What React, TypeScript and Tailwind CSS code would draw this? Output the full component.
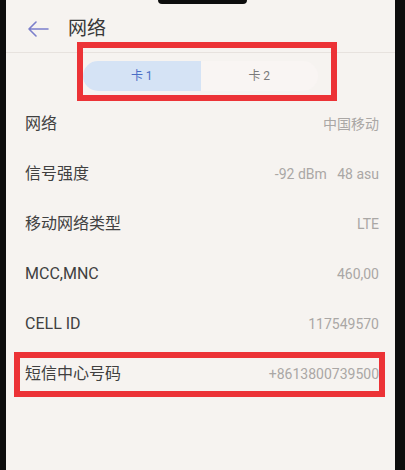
import React from 'react';

type Row = { label: string; value: string };

const rows: Row[] = [
  { label: '网络', value: '中国移动' },
  { label: '信号强度', value: '-92 dBm   48 asu' },
  { label: '移动网络类型', value: 'LTE' },
  { label: 'MCC,MNC', value: '460,00' },
  { label: 'CELL ID', value: '117549570' },
  { label: '短信中心号码', value: '+8613800739500' },
];

const BackArrow: React.FC = () => (
  <svg width="22" height="16" viewBox="0 0 22 16" fill="none">
    <path d="M21 8H2M9 1L2 8l7 7" stroke="#7b7fcb" strokeWidth="1.6" strokeLinecap="round" strokeLinejoin="round" />
  </svg>
);

const App: React.FC = () => {
  return (
    <div className="relative w-[405px] h-[470px] bg-[#0d0d0d] overflow-hidden font-['Roboto','Noto_Sans_CJK_SC',sans-serif]">
      <div className="ml-[6px] mr-[10px] h-full bg-[#f6f3f0] flex flex-col">
        {/* header */}
        <div className="h-[53px] flex items-center border-b border-[#e7e2de] pt-[6px]">
          <div className="ml-[21px] w-[22px] flex items-center">
            <BackArrow />
          </div>
          <span className="ml-[19px] text-[19px] text-[#383838]">网络</span>
        </div>

        {/* sim tabs */}
        <div className="h-[46px] flex items-start justify-center pt-[8px]">
          <div className="w-[235px] h-[30px] flex rounded-full bg-[#f9f5f3] text-[12px]">
            <div className="flex-1 rounded-l-full bg-[#d5e3f5] flex items-center justify-center text-[#4b6fc6]">
              卡 1
            </div>
            <div className="flex-1 flex items-center justify-center text-[#7a7a7a]">卡 2</div>
          </div>
        </div>

        {/* info rows */}
        <div className="flex flex-col">
          {rows.map((r) => (
            <div key={r.label} className="h-[50px] flex items-center justify-between pl-[19px] pr-[16px]">
              <span className="text-[16px] text-[#404040]">{r.label}</span>
              <span className="text-[14px] text-[#aaa7a5] whitespace-pre">{r.value}</span>
            </div>
          ))}
        </div>
      </div>

      {/* notch */}
      <div className="absolute left-[158px] top-0 w-[89px] h-[4px] bg-[#0d0d0d] rounded-b-[6px]" />

      {/* annotation boxes */}
      <div className="absolute left-[77px] top-[42px] w-[260px] h-[59px] border-[6px] border-[#ec3236]" />
      <div className="absolute left-[14px] top-[352px] w-[371px] h-[45px] border-[6px] border-[#ec3236]" />
    </div>
  );
};

export default App;
